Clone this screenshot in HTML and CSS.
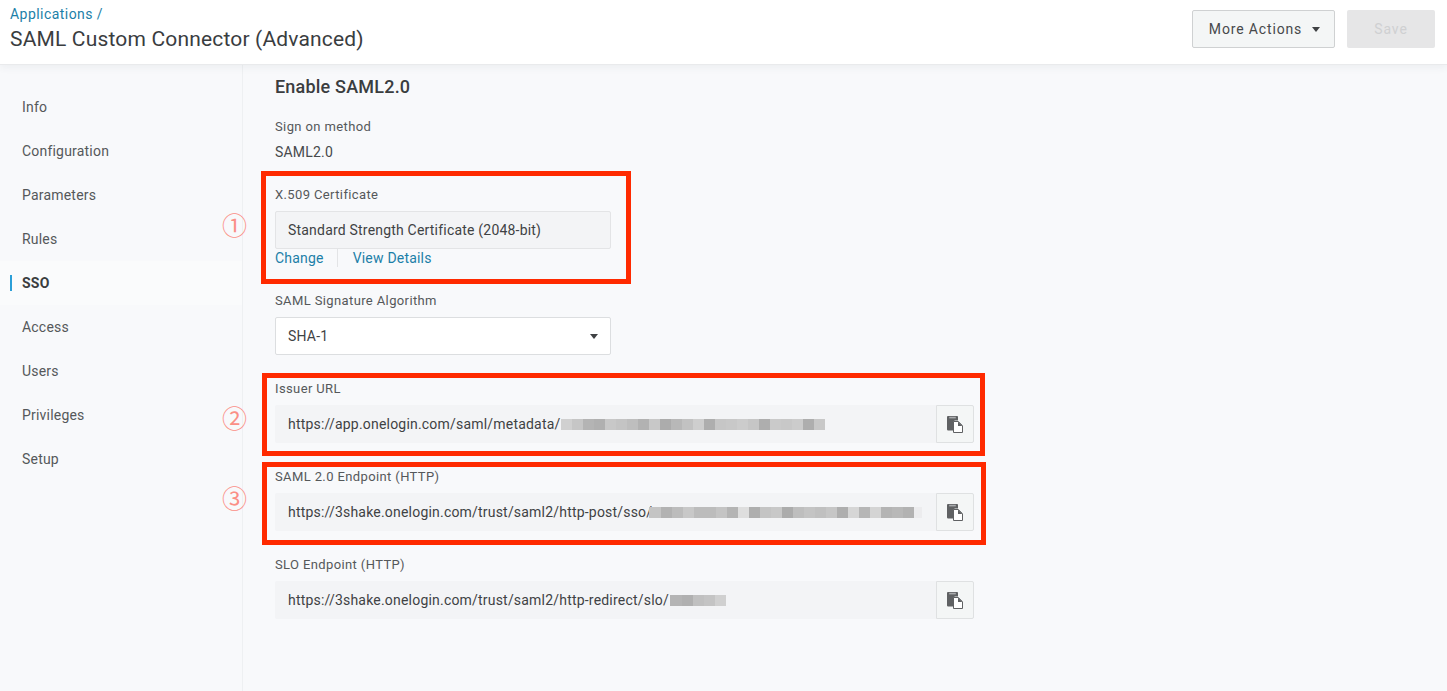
FILE: index.html
```html
<!DOCTYPE html>
<html lang="en">
<head>
<meta charset="utf-8">
<title>SAML Custom Connector (Advanced)</title>
<link rel="stylesheet" href="styles.css">
</head>
<body>
<svg class="defs" width="0" height="0" aria-hidden="true">
  <symbol id="copy" viewBox="0 0 16 17">
    <path fill="#5f6163" d="M1.3 0H9.7A1.2 1.2 0 0 1 11 1.3V4.5H7.5V14.5H1.3A1.2 1.2 0 0 1 0 13.2V1.3A1.2 1.2 0 0 1 1.3 0Z"/>
    <rect x="2.2" y=".8" width="6.6" height="1.6" fill="#a9abad"/>
    <path fill="#fff" stroke="#5f6163" stroke-width="1" d="M6.5 5.5H11.3L15.5 9.7V16.5H6.5Z"/>
    <path fill="#5f6163" d="M11 5.5L15.5 10H11Z"/>
  </symbol>
</svg>
<header class="topbar">
  <div class="titles">
    <a class="crumb" href="#">Applications /</a>
    <h1 class="title">SAML Custom Connector (Advanced)</h1>
  </div>
  <div class="actions">
    <button class="btn btn-more" type="button">More Actions<span class="caret"></span></button>
    <button class="btn btn-save" type="button">Save</button>
  </div>
</header>
<div class="body">
  <nav class="side">
    <a class="side-item" href="#">Info</a>
    <a class="side-item" href="#">Configuration</a>
    <a class="side-item" href="#">Parameters</a>
    <a class="side-item" href="#">Rules</a>
    <a class="side-item active" href="#">SSO</a>
    <a class="side-item" href="#">Access</a>
    <a class="side-item" href="#">Users</a>
    <a class="side-item" href="#">Privileges</a>
    <a class="side-item" href="#">Setup</a>
  </nav>
  <main class="main">
    <h2 class="heading">Enable SAML2.0</h2>

    <section class="group group-method">
      <div class="label">Sign on method</div>
      <div class="value">SAML2.0</div>
    </section>

    <section class="group group-cert">
      <div class="label">X.509 Certificate</div>
      <div class="control narrow readonly bordered">Standard Strength Certificate (2048-bit)</div>
      <div class="links">
        <a class="link link-first" href="#">Change</a>
        <a class="link" href="#">View Details</a>
      </div>
    </section>

    <section class="group">
      <div class="label">SAML Signature Algorithm</div>
      <div class="control narrow select">SHA-1<span class="caret"></span></div>
    </section>

    <section class="group">
      <div class="label">Issuer URL</div>
      <div class="copy-row">
        <div class="control readonly wide">https://app.onelogin.com/saml/metadata/<span class="mosaic m1"></span></div>
        <button class="copy-btn" type="button" aria-label="Copy"><svg class="copy-icon"><use href="#copy"/></svg></button>
      </div>
    </section>

    <section class="group">
      <div class="label">SAML 2.0 Endpoint (HTTP)</div>
      <div class="copy-row">
        <div class="control readonly wide">https://3shake.onelogin.com/trust/saml2/http-post/sso/<span class="mosaic m2"></span></div>
        <button class="copy-btn" type="button" aria-label="Copy"><svg class="copy-icon"><use href="#copy"/></svg></button>
      </div>
    </section>

    <section class="group">
      <div class="label">SLO Endpoint (HTTP)</div>
      <div class="copy-row">
        <div class="control readonly wide">https://3shake.onelogin.com/trust/saml2/http-redirect/slo/<span class="mosaic m3"></span></div>
        <button class="copy-btn" type="button" aria-label="Copy"><svg class="copy-icon"><use href="#copy"/></svg></button>
      </div>
    </section>
  </main>
</div>

<div class="mark mark-1"></div>
<div class="mark mark-2"></div>
<div class="mark mark-3"></div>
<span class="num num-1">①</span>
<span class="num num-2">②</span>
<span class="num num-3">③</span>
</body>
</html>
```
FILE: styles.css
```css
* { box-sizing: border-box; }
html, body { margin: 0; height: 100%; }
body {
  position: relative;
  height: 691px;
  overflow: hidden;
  background: #f8f9fb;
  color: #434648;
  font-family: Roboto, "Liberation Sans", sans-serif;
  font-size: 14px;
  letter-spacing: .2px;
}
.defs { position: absolute; }
a { text-decoration: none; }

.topbar {
  position: relative;
  z-index: 2;
  height: 65px;
  background: #fff;
  border-bottom: 1px solid #e9eaec;
  box-shadow: 0 2px 8px rgba(60, 70, 80, .07);
  display: flex;
  justify-content: space-between;
  padding: 5px 12px 0 10px;
}
.crumb { display: block; font-size: 14px; line-height: 18px; color: #1c7fa8; letter-spacing: .45px; }
.title { margin: 2px 0 0; font-size: 21px; line-height: 28px; font-weight: 400; color: #3a3d3f; letter-spacing: .17px; }
.actions { display: flex; gap: 12px; padding-top: 5px; }
.btn {
  height: 38px;
  border-radius: 2px;
  font: inherit;
  letter-spacing: .85px;
  display: flex;
  align-items: center;
  justify-content: center;
}
.btn-more {
  width: 143px;
  background: #f4f6f6;
  border: 1px solid #cfd1d2;
  color: #47494b;
  gap: 10px;
  padding-left: 8px;
}
.btn-save { width: 88px; background: #e6e6e7; border: 0; color: #cfd0d2; }
.caret {
  display: inline-block;
  width: 0;
  height: 0;
  border-left: 4.5px solid transparent;
  border-right: 4.5px solid transparent;
  border-top: 5px solid #3f4143;
}

.body { display: flex; height: 626px; }
.side {
  width: 243px;
  flex: none;
  border-right: 1px solid #eef0f2;
  padding-top: 20px;
}
.side-item {
  display: flex;
  align-items: center;
  height: 44px;
  padding-left: 22px;
  color: #55585a;
  position: relative;
}
.side-item.active {
  color: #3a3d3f;
  font-weight: 700;
  background: #fafbfc;
}
.side-item.active::before {
  content: "";
  position: absolute;
  left: 10px;
  top: 14px;
  width: 2px;
  height: 16px;
  background: #2b9fd8;
}

.main { flex: 1; padding: 10px 0 0 32px; }
.heading { margin: 0 0 17px; font-size: 18px; line-height: 24px; font-weight: 500; color: #3a3d3f; letter-spacing: .2px; }
.group { margin-bottom: 23px; }
.group-method { margin-bottom: 22px; }
.label { font-size: 13px; line-height: 20px; padding-top: 1px; height: 21px; margin-bottom: 6px; color: #55585a; letter-spacing: .38px; }
.value { line-height: 20px; margin-top: -1px; color: #47494b; }

.control {
  height: 38px;
  display: flex;
  align-items: center;
  padding-left: 13px;
  border-radius: 2px;
  white-space: nowrap;
  color: #3f4244;
}
.narrow { width: 336px; }
.readonly { background: #f3f4f6; }
.bordered { border: 1px solid #e3e4e6; padding-left: 12px; }
.select {
  background: #fff;
  border: 1px solid #dcdee0;
  padding: 0 12px;
  justify-content: space-between;
}
.links { display: flex; height: 18px; align-items: center; }
.link { color: #1c7fa8; line-height: 18px; }
.link-first { padding-right: 13px; margin-right: 15px; border-right: 1px solid #e3e4e6; }

.copy-row { display: flex; width: 699px; }
.wide { flex: 1; min-width: 0; border-radius: 2px 0 0 2px; overflow: hidden; }
.copy-btn {
  width: 38px;
  height: 38px;
  flex: none;
  padding: 0;
  background: #f4f6f6;
  border: 1px solid #dfe1e2;
  border-radius: 0 2px 2px 0;
  display: flex;
  align-items: center;
  justify-content: center;
}
.copy-icon { width: 16px; height: 17px; }

.mosaic { display: block; height: 11px; flex: none; }
.m1 {
  width: 264px;
  margin-left: 1px;
  background: linear-gradient(90deg,
    #d0d0d0 0 11px, #c6c6c6 0 22px, #b4b4b4 0 33px, #b0b0b0 0 44px, #c8c8c8 0 55px,
    #c4c4c4 0 66px, #bebebe 0 77px, #b2b2b2 0 88px, #c8c8c8 0 99px, #acacac 0 110px,
    #b8b8b8 0 121px, #c2c2c2 0 132px, #cecece 0 143px, #aeaeae 0 154px, #c6c6c6 0 165px,
    #c8c8c8 0 176px, #cccccc 0 187px, #c6c6c6 0 198px, #aeaeae 0 209px, #cacaca 0 220px,
    #c8c8c8 0 231px, #cccccc 0 242px, #aeaeae 0 253px, #c8c8c8 0 264px);
}
.m2 {
  width: 273px;
  margin-left: -3px;
  background: linear-gradient(90deg,
    #c4c4c4 0 12px, #b2b2b2 0 23px, #bcbcbc 0 34px, #c8c8c8 0 45px,
    #bcbcbc 0 56px, #bcbcbc 0 67px, #c4c4c4 0 78px, #b4b4b4 0 89px, #dedede 0 100px,
    #aeaeae 0 111px, #c4c4c4 0 122px, #c8c8c8 0 133px, #acacac 0 144px, #bebebe 0 155px,
    #c4c4c4 0 166px, #c0c0c0 0 177px, #c6c6c6 0 188px, #aeaeae 0 199px, #d6d6d6 0 210px,
    #b6b6b6 0 221px, #d4d4d4 0 232px, #b4b4b4 0 243px, #b8b8b8 0 254px, #b2b2b2 0 265px, #ececee 0 273px);
}
.m3 {
  width: 56px;
  margin-left: 1px;
  background: linear-gradient(90deg,
    #b4b4b4 0 12px, #b0b0b0 0 23px, #c0c0c0 0 34px, #c4c4c4 0 45px, #d0d0d0 0 56px);
}

.mark { position: absolute; border: 5px solid #ff2a00; z-index: 3; }
.mark-1 { left: 261px; top: 171px; width: 370px; height: 113px; }
.mark-2 { left: 262px; top: 373px; width: 723px; height: 83px; }
.mark-3 { left: 262px; top: 462px; width: 724px; height: 83px; }
.num {
  position: absolute;
  left: 222px;
  z-index: 3;
  width: 25px;
  text-align: center;
  font-family: "Noto Sans CJK JP", sans-serif;
  font-size: 25px;
  line-height: 26px;
  color: #fb8f86;
  letter-spacing: 0;
}
.num-1 { top: 211px; }
.num-2 { top: 404px; }
.num-3 { top: 484px; }
```
